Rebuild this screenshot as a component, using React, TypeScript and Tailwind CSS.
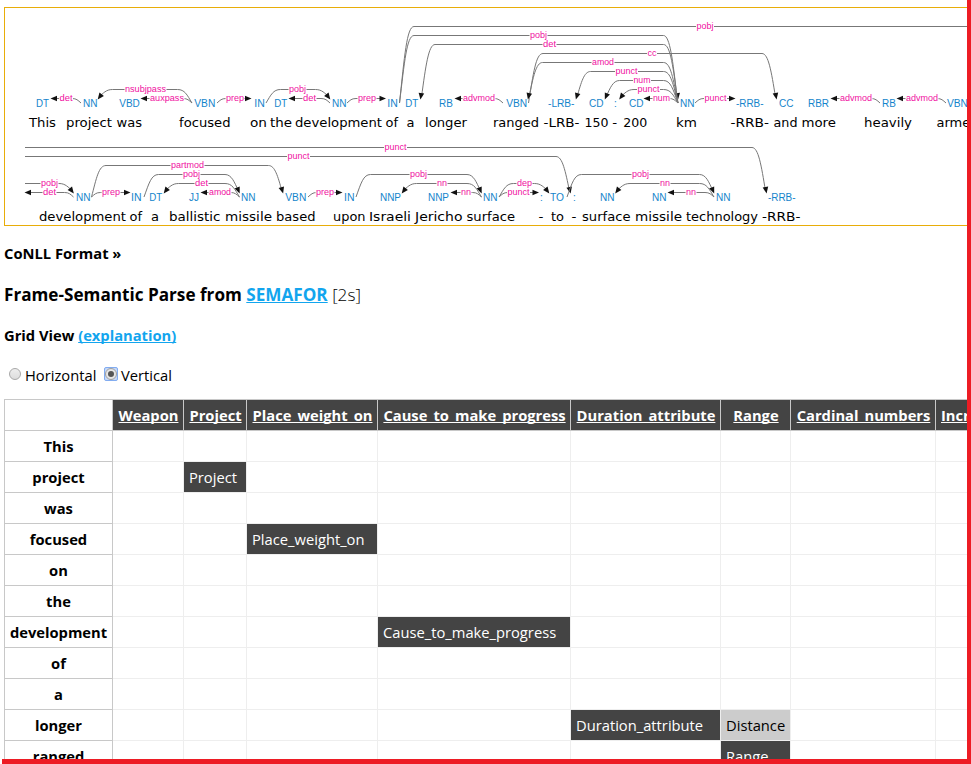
import React from "react";

type Arc = { from?: number; to?: number; y: number; label: string; at: number; w: number };
type Token = [text: string, x: number, width: number];

const arcsTop: Arc[] = [
  { from: 81, to: 51, y: 98.5, label: "det", at: 66, w: 13 },
  { from: 192, to: 98, y: 89.5, label: "nsubjpass", at: 145.5, w: 41 },
  { from: 192, to: 141, y: 98.5, label: "auxpass", at: 167, w: 34 },
  { from: 217, to: 251, y: 98.5, label: "prep", at: 235, w: 18 },
  { from: 266, to: 330, y: 89.5, label: "pobj", at: 297.5, w: 17 },
  { from: 330, to: 289, y: 98.5, label: "det", at: 309.5, w: 13 },
  { from: 347, to: 385.5, y: 98.5, label: "prep", at: 367, w: 18 },
  { from: 399.5, y: 26.5, label: "pobj", at: 705, w: 17 },
  { from: 399.5, to: 678, y: 35.5, label: "pobj", at: 538.5, w: 17 },
  { from: 678, to: 420.5, y: 44.5, label: "det", at: 549.5, w: 13 },
  { from: 528.5, to: 776.5, y: 53.5, label: "cc", at: 652, w: 9 },
  { from: 678, to: 528, y: 62.5, label: "amod", at: 603, w: 22 },
  { from: 678, to: 576, y: 71.5, label: "punct", at: 626.5, w: 22 },
  { from: 678, to: 605, y: 80.5, label: "num", at: 642, w: 17 },
  { from: 678, to: 619.5, y: 89.5, label: "punct", at: 648.5, w: 22 },
  { from: 678, to: 644, y: 98.5, label: "num", at: 661.5, w: 17 },
  { from: 503, to: 455, y: 98.5, label: "advmod", at: 479, w: 32 },
  { from: 695, to: 735, y: 98.5, label: "punct", at: 715.5, w: 22 },
  { from: 880, to: 831, y: 98.5, label: "advmod", at: 856, w: 32 },
  { from: 946, to: 897, y: 98.5, label: "advmod", at: 922, w: 32 },
];

const arcsBottom: Arc[] = [
  { to: 766.5, y: 147.5, label: "punct", at: 395.5, w: 22 },
  { to: 570.5, y: 156.5, label: "punct", at: 298.5, w: 22 },
  { from: 91.5, to: 283, y: 165.5, label: "partmod", at: 187.5, w: 33 },
  { to: 73.5, y: 183.5, label: "pobj", at: 49.5, w: 17 },
  { from: 73.5, to: 25, y: 192.5, label: "det", at: 49.5, w: 13 },
  { from: 91.5, to: 130, y: 192.5, label: "prep", at: 111, w: 18 },
  { from: 144, to: 239.5, y: 174.5, label: "pobj", at: 191.5, w: 17 },
  { from: 239.5, to: 164, y: 183.5, label: "det", at: 201.5, w: 13 },
  { from: 239.5, to: 201, y: 192.5, label: "amod", at: 220, w: 22 },
  { from: 308, to: 342, y: 192.5, label: "prep", at: 325, w: 18 },
  { from: 356, to: 481.5, y: 174.5, label: "pobj", at: 418.5, w: 17 },
  { from: 481.5, to: 402, y: 183.5, label: "nn", at: 442, w: 10 },
  { from: 481.5, to: 451, y: 192.5, label: "nn", at: 466, w: 10 },
  { from: 499, to: 549, y: 183.5, label: "dep", at: 524.5, w: 15 },
  { from: 499, to: 538.5, y: 192.5, label: "punct", at: 518.5, w: 22 },
  { from: 567, to: 714, y: 174.5, label: "pobj", at: 640.5, w: 17 },
  { from: 714, to: 615.5, y: 183.5, label: "nn", at: 665, w: 10 },
  { from: 714, to: 668, y: 192.5, label: "nn", at: 691, w: 10 },
];

const tagsTop: Token[] = [
  ["DT", 36, 13], ["NN", 83, 14.5], ["VBD", 119.3, 20.5], ["VBN", 194.3, 21], ["IN", 254.3, 10.5],
  ["DT", 274.2, 13], ["NN", 332, 14.5], ["IN", 387.3, 10.5], ["DT", 405.2, 13], ["RB", 439, 13.8],
  ["VBN", 506.2, 21], ["-LRB-", 548, 26.5], ["CD", 589, 14.5], [":", 614, 2.8], ["CD", 629, 14.5],
  ["NN", 680, 14.5], ["-RRB-", 736, 27.5], ["CC", 779, 14.5], ["RBR", 808, 21], ["RB", 882, 13.8], ["VBN", 947, 21],
];
const tagsBottom: Token[] = [
  ["NN", 76, 14.5], ["IN", 131, 10.5], ["DT", 149.2, 13], ["JJ", 189, 10], ["NN", 241, 14.5],
  ["VBN", 285.3, 21], ["IN", 344, 10.5], ["NNP", 380, 21], ["NNP", 428, 21], ["NN", 483, 14.5],
  [":", 540, 2.8], ["TO", 550, 14], [":", 573, 2.8], ["NN", 600, 14.5], ["NN", 652, 14.5], ["NN", 716, 14.5], ["-RRB-", 768, 27.5],
];
const wordsTop: Token[] = [
  ["This", 29, 27], ["project", 66, 46], ["was", 116.5, 25.5], ["focused", 179, 51.5], ["on", 250, 17],
  ["the", 270, 22], ["development", 295, 87], ["of", 385.5, 12.5], ["a", 406.5, 8], ["longer", 425, 42],
  ["ranged", 493, 46], ["-LRB-", 543.5, 36], ["150", 584.5, 24], ["-", 612.3, 4.9], ["200", 623.3, 24], ["km", 676, 21],
  ["-RRB-", 730.5, 38.5], ["and", 773.5, 24], ["more", 801.5, 34.5], ["heavily", 864, 48], ["armed", 936.5, 42],
];
const wordsBottom: Token[] = [
  ["development", 39, 87], ["of", 129.5, 12.5], ["a", 151, 8], ["ballistic", 169, 51.5], ["missile", 225, 47],
  ["based", 276, 39.5], ["upon", 333, 32.5], ["Israeli", 369, 42], ["Jericho", 415, 47.5], ["surface", 466.5, 48.5],
  ["-", 538.5, 4.9], ["to", 551, 13], ["-", 571.5, 4.9], ["surface", 582, 48.5], ["missile", 635, 47], ["technology", 686, 72], ["-RRB-", 762, 38.5],
];

function ArcShape({ arc, base }: { arc: Arc; base: number }) {
  const { from, to, y, label, at, w } = arc;
  const low = base - y < 6;
  const left = 25;
  const right = 967;
  const dir = from === undefined || to === undefined || to > from ? 1 : -1;
  const tipY = low ? y : base - 4;
  const corner = low ? 9 : 14.5;
  let d = "";
  if (from === undefined) d = `M${left} ${y}`;
  else {
    const h = base - y;
    d = `M${from} ${base} C${from + dir * corner * 0.34} ${base - h * 0.6} ${from + dir * corner * 0.5} ${y} ${from + dir * corner} ${y}`;
  }
  let angle = dir === 1 ? 0 : 180;
  if (to === undefined) d += ` H${right}`;
  else if (low) d += ` H${to - dir * 4}`;
  else {
    const h = tipY - y;
    const k = 5.2;
    d += ` H${to - dir * 14.5} C${to - dir * 8} ${y} ${to - dir * k} ${y + h * 0.4} ${to - dir} ${tipY - 2}`;
    angle = (Math.atan2(h * 0.6 + 1, dir * k) * 180) / Math.PI;
  }
  return (
    <g>
      <path d={d} fill="none" stroke="#777" strokeWidth="1" />
      {to !== undefined && <path d="M0.5 0 L-6 -2.8 V2.8 Z" fill="#111" transform={`translate(${to} ${tipY}) rotate(${angle})`} />}
      <rect x={at - w / 2 - 0.5} y={y - 4} width={w + 1} height="8" fill="#fff" />
      <text x={at - w / 2} y={y + 2.5} textLength={w} lengthAdjust="spacingAndGlyphs" fill="#f0109f" fontSize="9">{label}</text>
    </g>
  );
}

function Tokens({ items, y }: { items: Token[]; y: number }) {
  return (
    <>
      {items.map(([t, x, w], i) => (
        <text key={i} x={x} y={y} textLength={w} lengthAdjust="spacingAndGlyphs">{t}</text>
      ))}
    </>
  );
}

function DependencyGraph() {
  return (
    <svg viewBox="5 8 962 217" className="block h-[217px] w-[962px] font-['Liberation_Sans',sans-serif]">
      {arcsTop.map((a, i) => <ArcShape key={i} arc={a} base={103} />)}
      {arcsBottom.map((a, i) => <ArcShape key={i} arc={a} base={197} />)}
      <g fill="#1484cb" fontSize="10">
        <Tokens items={tagsTop} y={107} />
        <Tokens items={tagsBottom} y={201} />
      </g>
      <g fill="#000" fontSize="13" className="font-['DejaVu_Sans',sans-serif]">
        <Tokens items={wordsTop} y={127} />
        <Tokens items={wordsBottom} y={221} />
      </g>
    </svg>
  );
}

const frames = ["Weapon", "Project", "Place_weight_on", "Cause_to_make_progress", "Duration_attribute", "Range", "Cardinal_numbers", "Increment"];
const words = ["This", "project", "was", "focused", "on", "the", "development", "of", "a", "longer", "ranged"];
const cells: Record<string, { text: string; role?: boolean }> = {
  "project:1": { text: "Project" },
  "focused:2": { text: "Place_weight_on" },
  "development:3": { text: "Cause_to_make_progress" },
  "longer:4": { text: "Duration_attribute" },
  "longer:5": { text: "Distance", role: true },
  "ranged:5": { text: "Range" },
};
const columns = "grid grid-cols-[108px_71px_63px_131px_193px_150px_70px_145px_87px]";

function FrameGrid() {
  return (
    <div className="w-[1019px] border-l border-t border-[#c8c8c8] leading-[30px]">
      <div className={columns}>
        <div className="h-[31px] border-b border-r border-[#c8c8c8]" />
        {frames.map((f) => (
          <div key={f} className="h-[31px] border-b border-r border-[#c8c8c8] bg-[#444] pl-[5px] pr-1 text-center font-bold whitespace-nowrap text-white last:text-left">
            <a className="underline [text-decoration-skip-ink:none]">{f}</a>
          </div>
        ))}
      </div>
      {words.map((word) => (
        <div key={word} className={columns}>
          <div className="h-[31px] border-b border-r border-[#c8c8c8] text-center font-bold">{word}</div>
          {frames.map((f, i) => {
            const cell = cells[`${word}:${i}`];
            const tone = !cell ? "" : cell.role ? "bg-[#ccc] bg-clip-padding" : "bg-[#444] bg-clip-padding text-white";
            return (
              <div key={f} className={`h-[31px] border-b border-r border-[#eee] pl-[5px] whitespace-nowrap ${tone}`}>
                {cell?.text}
              </div>
            );
          })}
        </div>
      ))}
    </div>
  );
}

export default function App() {
  return (
    <div className="flex h-[764px] w-[971px] overflow-hidden bg-white font-['Open_Sans',sans-serif] text-[14.72px] text-black">
      <div className="flex h-[764px] w-[967px] shrink-0 flex-col">
        <main className="h-[759px] shrink-0 overflow-hidden pl-1 pt-[7px]">
          <div className="h-[219px] w-[963px] border-y border-l border-[#e8ad09]">
            <DependencyGraph />
          </div>
          <h4 className="mt-[17px] h-5 leading-5 font-bold">CoNLL Format »</h4>
          <h3 className="mt-5 h-6 text-[17.15px] leading-6 font-bold">
            Frame-Semantic Parse from <a className="text-[#12a5ee] underline">SEMAFOR</a> <span className="font-light">[2s]</span>
          </h3>
          <h4 className="mt-[18px] h-5 leading-5 font-bold">
            Grid View <a className="text-[#12a5ee] underline [text-decoration-skip-ink:none]">(explanation)</a>
          </h4>
          <div className="mt-5 flex h-5 items-center leading-5">
            <span className="mb-0.5 ml-[5px] size-3 rounded-full border border-[#a8a8a8] bg-linear-to-b from-[#eee] to-[#ddd]" />
            <span className="ml-1 w-[79px]">Horizontal</span>
            <span className="mb-0.5 flex size-[14px] items-center justify-center rounded-[2px] border border-[#82acf0] bg-[#c4d8fa]">
              <span className="flex size-3 items-center justify-center rounded-full border border-[#a0a0a0] bg-[#e6e6e6]">
                <span className="size-1.5 rounded-full bg-[#555]" />
              </span>
            </span>
            <span className="ml-[3px]">Vertical</span>
          </div>
          <div className="mt-[14px]"><FrameGrid /></div>
        </main>
        <div className="ml-0.5 h-[5px] bg-[#ed1c24]" />
      </div>
      <div className="w-1 shrink-0 bg-[#ed1c24]" />
    </div>
  );
}
